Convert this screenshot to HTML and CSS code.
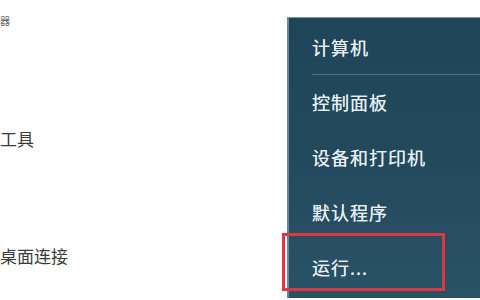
FILE: index.html
```html
<!DOCTYPE html>
<html lang="zh-CN">
<head>
    <meta charset="UTF-8">
    <meta name="viewport" content="width=device-width, initial-scale=1.0">
    <title>开始菜单</title>
    <link rel="stylesheet" href="styles.css">
</head>
<body>
    <div class="start-menu">
        <div class="program-list">
            <div class="clip-top">器</div>
            <div class="program-item tools">工具</div>
            <div class="program-item remote">桌面连接</div>
        </div>
        <div class="side-panel">
            <ul class="side-links">
                <li class="side-link first">计算机</li>
                <li class="side-link">控制面板</li>
                <li class="side-link">设备和打印机</li>
                <li class="side-link">默认程序</li>
                <li class="side-link run">运行...<span class="highlight"></span></li>
            </ul>
        </div>
    </div>
</body>
</html>
```

FILE: styles.css
```css
html, body { margin: 0; padding: 0; background: #fff; }
body { font-family: "Noto Sans CJK SC", "Noto Sans", sans-serif; width: 480px; height: 300px; overflow: hidden; }
.start-menu { display: flex; height: 300px; }
.program-list { width: 287px; flex-shrink: 0; color: #3a3a3a; font-size: 17px; }
.clip-top { margin-top: 15px; font-size: 10px; line-height: 12px; color: #666; }
.program-item { line-height: 20px; white-space: nowrap; }
.tools { margin-top: 102px; }
.remote { margin-top: 97px; }
.side-panel {
    flex: 1;
    margin-top: 17px;
    height: 280px;
    border-top: 1px solid #7f95a2;
    border-left: 2px solid #6d8492;
    background:
        radial-gradient(ellipse 16px 75px at 468px 100px, rgba(6, 22, 34, 0.85), rgba(6, 22, 34, 0) 100%),
        linear-gradient(180deg, #1f4559 0%, #23495d 50%, #2a5266 100%);
    position: relative;
}
.side-links { list-style: none; margin: 0; padding: 2px 0 0 0; }
.side-link {
    height: 55px;
    line-height: 55px;
    padding-left: 23px;
    color: #e8eff3;
    font-size: 18px;
    letter-spacing: 1px;
    text-shadow: 0 0 0.4px #e8eff3;
    white-space: nowrap;
    position: relative;
}
.side-link.first::after {
    content: "";
    position: absolute;
    left: 23px;
    right: 0;
    bottom: 0;
    height: 1px;
    background: #4f7384;
}
.highlight {
    position: absolute;
    left: -7px;
    top: -7px;
    width: 157px;
    height: 52px;
    border: 3px solid #d9393f;
}
```
